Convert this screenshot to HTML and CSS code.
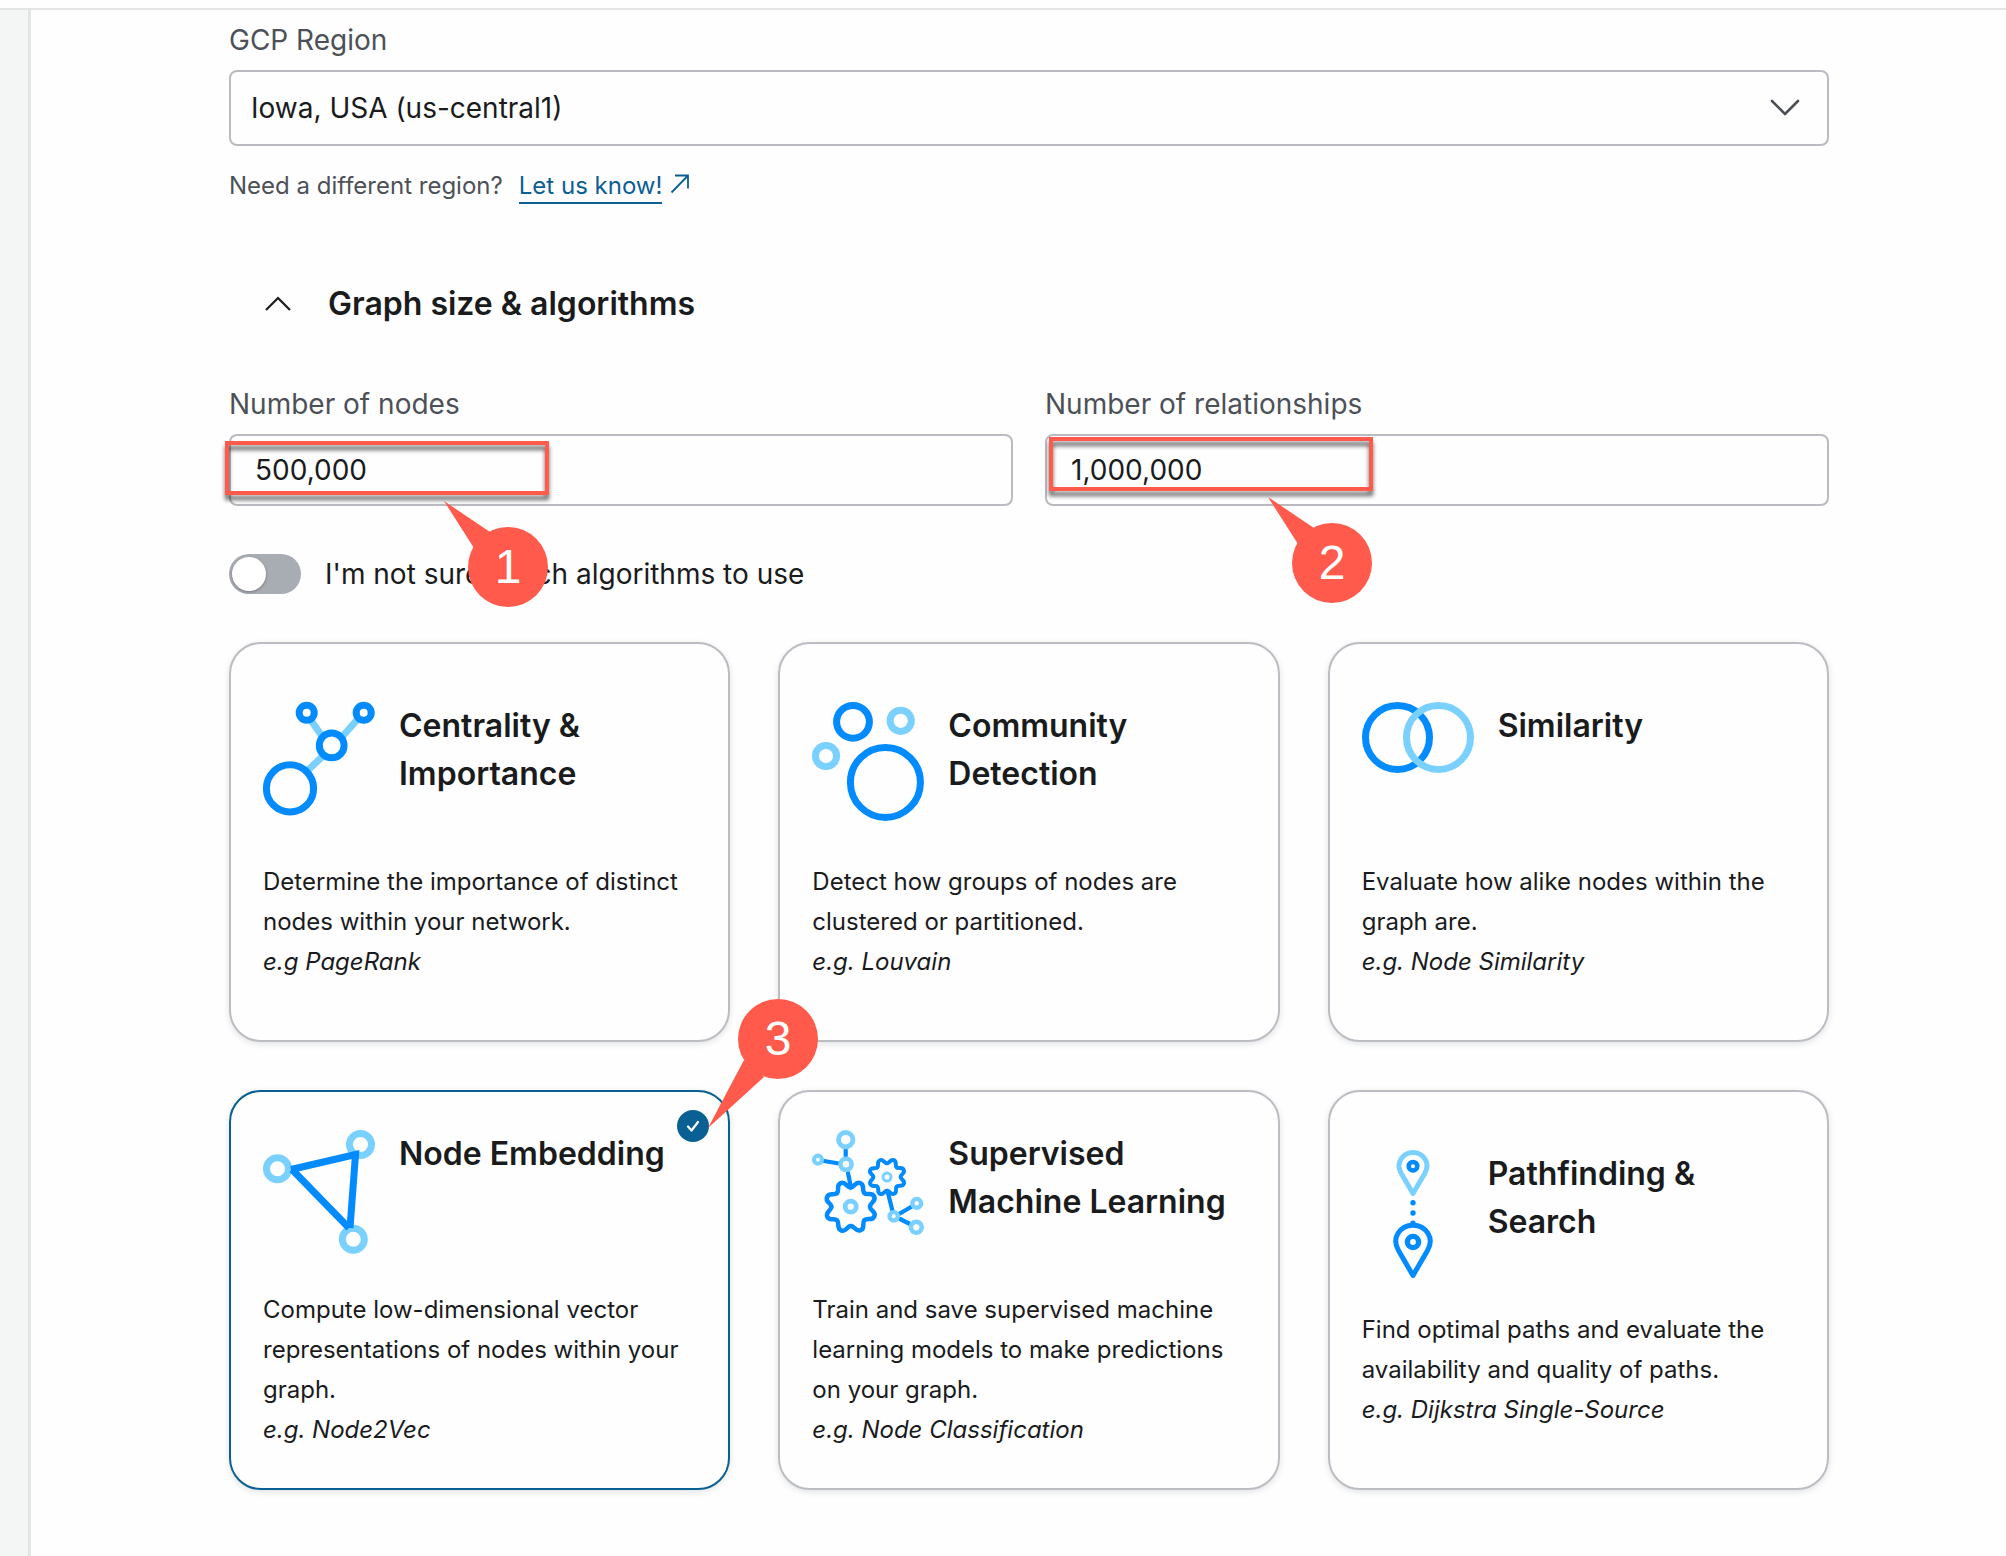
FILE: index.html
```html
<!DOCTYPE html>
<html lang="en">
<head>
<meta charset="utf-8">
<meta name="viewport" content="width=device-width, initial-scale=1">
<title>Graph size &amp; algorithms</title>
<link rel="stylesheet" href="styles.css">
</head>
<body>
<header class="topbar"></header>
<div class="shell">
  <aside class="rail"></aside>
  <main class="content">
    <section class="region">
      <label class="label" for="region">GCP Region</label>
      <div class="select-wrap">
        <select class="control select" id="region">
          <option>Iowa, USA (us-central1)</option>
        </select>
        <svg class="select-arrow" width="30" height="18" viewBox="0 0 30 18" aria-hidden="true"><path d="M2 2l13 13L28 2" fill="none" stroke="#4d4f57" stroke-width="2.6" stroke-linecap="round" stroke-linejoin="round"/></svg>
      </div>
      <p class="helper">
        <span>Need a different region?</span>
        <a class="link" href="#"><span class="link-text">Let us know!</span><svg class="link-icon" width="20" height="20" viewBox="0 0 20 20" aria-hidden="true"><path d="M1.500 18.500L18 1.500M5 1.500h13v13" fill="none" stroke="#0b6093" stroke-width="1.800"/></svg></a>
      </p>
    </section>

    <h2 class="section-title">
      <button class="section-toggle" type="button" aria-expanded="true">
        <svg width="26" height="16" viewBox="0 0 26 16" aria-hidden="true"><path d="M1 14L13 2l12 12" fill="none" stroke="#1a1b1d" stroke-width="2.200"/></svg>
        <span>Graph size &amp; algorithms</span>
      </button>
    </h2>

    <div class="sizes">
      <div class="field">
        <label class="label" for="nodes">Number of nodes</label>
        <input class="control" id="nodes" type="text" value="500,000">
        <div class="marker marker-nodes"></div>
        <svg class="callout callout-nodes" width="108" height="108" viewBox="0 0 108 108"><path d="M3 1L49 32 33 48z"/><circle cx="67" cy="67" r="40"/><text x="67" y="83">1</text></svg>
      </div>
      <div class="field">
        <label class="label" for="rels">Number of relationships</label>
        <input class="control" id="rels" type="text" value="1,000,000">
        <div class="marker marker-rels"></div>
        <svg class="callout callout-rels" width="108" height="108" viewBox="0 0 108 108"><path d="M3 1L49 32 33 48z"/><circle cx="67" cy="67" r="40"/><text x="67" y="83">2</text></svg>
      </div>
    </div>

    <label class="switch-row"><input class="switch" type="checkbox" role="switch"><span>I'm not sure which algorithms to use</span></label>

    <div class="cards">
      <label class="card">
        <input class="card-check" type="checkbox">
        <span class="card-head">
          <svg class="card-icon" width="112" height="120" viewBox="0 0 112 120" aria-hidden="true">
            <g fill="none" stroke-width="7"><path d="M47 17l14 20M94 18L78 36M60 54L43 70" stroke="#7ad1ff"/><g stroke="#018bff"><circle cx="43.700" cy="10.800" r="7.500"/><circle cx="100.700" cy="10.800" r="7.500"/><circle cx="68.700" cy="43.400" r="12.400"/><circle cx="27" cy="86.400" r="23.600"/></g></g>
          </svg>
          <span class="card-title">Centrality &amp; Importance</span>
        </span>
        <span class="card-text">Determine the importance of distinct nodes within your network.<br><em>e.g PageRank</em></span>
      </label>

      <label class="card">
        <input class="card-check" type="checkbox">
        <span class="card-head">
          <svg class="card-icon" width="112" height="120" viewBox="0 0 112 120" aria-hidden="true">
            <g fill="none" stroke-width="7"><g stroke="#018bff"><circle cx="41" cy="19.800" r="16.400"/><circle cx="73.400" cy="80.400" r="35"/></g><g stroke="#7ad1ff"><circle cx="88.700" cy="18.800" r="10.600"/><circle cx="14" cy="54" r="10.600"/></g></g>
          </svg>
          <span class="card-title">Community Detection</span>
        </span>
        <span class="card-text">Detect how groups of nodes are clustered or partitioned.<br><em>e.g. Louvain</em></span>
      </label>

      <label class="card">
        <input class="card-check" type="checkbox">
        <span class="card-head">
          <svg class="card-icon" width="112" height="120" viewBox="0 0 112 120" aria-hidden="true">
            <g fill="none" stroke-width="7"><circle cx="35.500" cy="35.500" r="32" stroke="#018bff"/><circle cx="76.500" cy="35.500" r="32" stroke="#7ad1ff"/></g>
          </svg>
          <span class="card-title">Similarity</span>
        </span>
        <span class="card-text">Evaluate how alike nodes within the graph are.<br><em>e.g. Node Similarity</em></span>
      </label>

      <div class="card-slot">
        <label class="card">
          <input class="card-check" type="checkbox" checked>
          <svg class="card-tick" width="32" height="32" viewBox="0 0 32 32" aria-hidden="true"><path d="M11 16.500l3.500 4L21 12" fill="none" stroke="#fff" stroke-width="2.200" stroke-linecap="round" stroke-linejoin="round"/></svg>
          <span class="card-head">
            <svg class="card-icon" width="112" height="120" viewBox="0 0 112 120" aria-hidden="true">
              <g fill="none" stroke-width="7"><g stroke="#7ad1ff"><circle cx="14.500" cy="38.700" r="11"/><circle cx="97.500" cy="14.500" r="11"/><circle cx="90.300" cy="109.300" r="11"/></g><path d="M28 39.500L92.500 24.500 87 98M29 39.500L86 98" stroke="#018bff"/></g>
            </svg>
            <span class="card-title">Node Embedding</span>
          </span>
          <span class="card-text">Compute low-dimensional vector representations of nodes within your graph.<br><em>e.g. Node2Vec</em></span>
        </label>
        <svg class="callout callout-card" width="112" height="132" viewBox="0 0 112 132"><path d="M1 130L37 62 57 79z"/><circle cx="71" cy="41" r="40"/><text x="71" y="57">3</text></svg>
      </div>

      <label class="card">
        <input class="card-check" type="checkbox">
        <span class="card-head">
          <svg class="card-icon" width="112" height="120" viewBox="0 0 112 120" aria-hidden="true">
            <defs>
              <path id="tooth" d="M0-19.300C4-19.300 4.500-25.800 9.600-23.700S10.600-16.300 13.650-13.650"/>
              <g id="gear"><use href="#tooth"/><use href="#tooth" transform="rotate(45)"/><use href="#tooth" transform="rotate(90)"/><use href="#tooth" transform="rotate(135)"/><use href="#tooth" transform="rotate(180)"/><use href="#tooth" transform="rotate(225)"/><use href="#tooth" transform="rotate(270)"/><use href="#tooth" transform="rotate(315)"/></g>
            </defs>
            <g fill="none" stroke="#018bff" stroke-width="4.200" stroke-linecap="round">
              <use href="#gear" transform="translate(38.700 76.700)" stroke-width="4.500"/>
              <use href="#gear" transform="translate(75 47) scale(.71)" stroke-width="5.600"/>
              <path d="M33.700 20v6M12 31l15 2.500M36 43l2.700 13M76 63l4.500 18M87 84l12-7M88 89l10 5"/>
            </g>
            <g fill="none" stroke="#7ad1ff"><circle cx="33.700" cy="9.700" r="7.200" stroke-width="4.800"/><circle cx="6" cy="29.700" r="4" stroke-width="4.200"/><circle cx="34" cy="34.300" r="5.600" stroke-width="4.600"/><circle cx="38.700" cy="76.700" r="5.500" stroke-width="4.800"/><circle cx="75" cy="47" r="4" stroke-width="3"/><circle cx="81.700" cy="86.300" r="4.200" stroke-width="4.400"/><circle cx="104.700" cy="73.300" r="4.400" stroke-width="4.400"/><circle cx="104.300" cy="97.300" r="5.400" stroke-width="4.600"/></g>
          </svg>
          <span class="card-title">Supervised Machine Learning</span>
        </span>
        <span class="card-text">Train and save supervised machine learning models to make predictions on your graph.<br><em>e.g. Node Classification</em></span>
      </label>

      <label class="card">
        <input class="card-check" type="checkbox">
        <span class="card-head">
          <svg class="card-icon" width="102" height="120" viewBox="0 0 102 120" aria-hidden="true">
            <g fill="none" stroke-width="5" stroke-linejoin="round"><path d="M51 43.500L39.300 23.500C36 18 36.800 12.500 39 9c3-4.500 7.500-6.500 12-6.500s9 2 12 6.500c2.200 3.500 3 9-.3 14.500z" stroke="#7ad1ff"/><path d="M51 125.500L36.500 100.500C32.700 94 33.500 87.500 36 83.300c3.500-5.600 9.500-8.100 15-8.100s11.500 2.500 15 8.100c2.500 4.200 3.300 10.700-.5 17.200z" stroke="#018bff"/><g stroke="#018bff"><circle cx="51" cy="16.200" r="4.300" stroke-width="4.500"/><circle cx="51" cy="92" r="5.600" stroke-width="5.400"/></g></g>
            <g fill="#018bff"><circle cx="51" cy="52.700" r="2.700"/><circle cx="51" cy="63" r="2.700"/><circle cx="51" cy="73.300" r="2.700"/></g>
          </svg>
          <span class="card-title">Pathfinding &amp; Search</span>
        </span>
        <span class="card-text">Find optimal paths and evaluate the availability and quality of paths.<br><em>e.g. Dijkstra Single-Source</em></span>
      </label>
    </div>
  </main>
</div>
</body>
</html>
```
FILE: styles.css
```css
* {
  box-sizing: border-box;
}

body {
  margin: 0;
  min-height: 100vh;
  display: flex;
  flex-direction: column;
  background: #fefefe;
  color: #1a1b1d;
  font-family: Inter, "Liberation Sans", sans-serif;
  font-size: 28px;
  line-height: 40px;
}

.topbar {
  height: 10px;
  border-bottom: 2px solid #e3e4e5;
}

.shell {
  flex: 1;
  display: flex;
}

.rail {
  flex: none;
  width: 31px;
  background: #f4f6f6;
  border-right: 3px solid #e2e4e5;
}

.content {
  flex: 1;
  min-width: 0;
  padding: 10px 177px 66px 198px;
}

.label {
  display: block;
  margin-bottom: 10px;
  color: #4d5157;
}

.control {
  display: block;
  width: 100%;
  height: 72px;
  padding: 0 24px;
  border: 2px solid #bbbac1;
  border-radius: 8px;
  background: #fefefe;
  color: inherit;
  font: inherit;
}

.select-wrap {
  position: relative;
}

.select {
  height: 76px;
  padding: 0 60px 0 20px;
  appearance: none;
}

.select-arrow {
  position: absolute;
  right: 29px;
  top: 29px;
  pointer-events: none;
}

.helper {
  display: flex;
  gap: 16px;
  margin: 20px 0 0;
  color: #4d5157;
  font-size: 24px;
}

.link {
  display: flex;
  gap: 8px;
  color: #0b6093;
  text-decoration: none;
}

.link-text {
  height: 38px;
  border-bottom: 2px solid #0b6093;
}

.link-icon {
  margin-top: 8px;
}

.section-title {
  margin: 74px 0 56px;
  font-size: 32px;
  line-height: 48px;
}

.section-toggle {
  display: flex;
  align-items: center;
  gap: 37px;
  padding: 0 0 0 36px;
  border: 0;
  background: none;
  color: inherit;
  font: inherit;
  font-weight: 600;
}

.sizes {
  display: grid;
  grid-template-columns: 1fr 1fr;
  gap: 32px;
}

.field {
  position: relative;
}

.marker {
  position: absolute;
  width: 324px;
  height: 54px;
  border: 4px solid #ff5a4b;
  filter: drop-shadow(0 5px 2px rgba(0, 0, 0, .6));
  pointer-events: none;
}

.marker-nodes {
  left: -4px;
  top: 57px;
}

.marker-rels {
  left: 4px;
  top: 53px;
}

.callout {
  position: absolute;
  z-index: 1;
  fill: #ff5a4b;
  pointer-events: none;
}

.callout text {
  fill: #fff;
  font-family: "Liberation Sans", sans-serif;
  font-size: 48px;
  text-anchor: middle;
}

.callout-nodes {
  left: 212px;
  top: 116px;
}

.callout-rels {
  left: 220px;
  top: 112px;
}

.callout-card {
  left: 478px;
  top: -92px;
}

.switch-row {
  display: flex;
  align-items: center;
  gap: 24px;
  width: fit-content;
  margin: 48px 0;
}

.switch {
  appearance: none;
  width: 72px;
  height: 40px;
  margin: 0;
  padding: 3px;
  border-radius: 20px;
  background: #a8acb3;
}

.switch::before {
  content: "";
  display: block;
  width: 34px;
  height: 34px;
  border-radius: 50%;
  background: #fff;
  box-shadow: 0 1px 3px rgba(0, 0, 0, .3);
}

.switch:checked::before {
  margin-left: 32px;
}

.cards {
  display: grid;
  grid-template-columns: repeat(3, 1fr);
  gap: 48px;
}

.card-slot {
  position: relative;
  display: grid;
}

.card {
  position: relative;
  display: flex;
  flex-direction: column;
  justify-content: center;
  gap: 40px;
  min-height: 400px;
  padding: 32px;
  border: 2px solid #bbbdc2;
  border-radius: 32px;
  background: #fefefe;
  box-shadow: 0 2px 6px rgba(12, 26, 37, .12);
  font-size: 24px;
}

.card:has(.card-check:checked) {
  border-color: #0b6093;
}

.card-check,
.card-tick {
  position: absolute;
  top: 18px;
  right: 19px;
  width: 32px;
  height: 32px;
  margin: 0;
}

.card-check {
  appearance: none;
  border-radius: 50%;
}

.card-check:checked {
  background: #0b6093;
}

.card-head {
  display: flex;
  gap: 24px;
  height: 120px;
}

.card-icon {
  flex: none;
  overflow: visible;
}

.card-title {
  font-size: 32px;
  font-weight: 600;
  line-height: 48px;
}
```
